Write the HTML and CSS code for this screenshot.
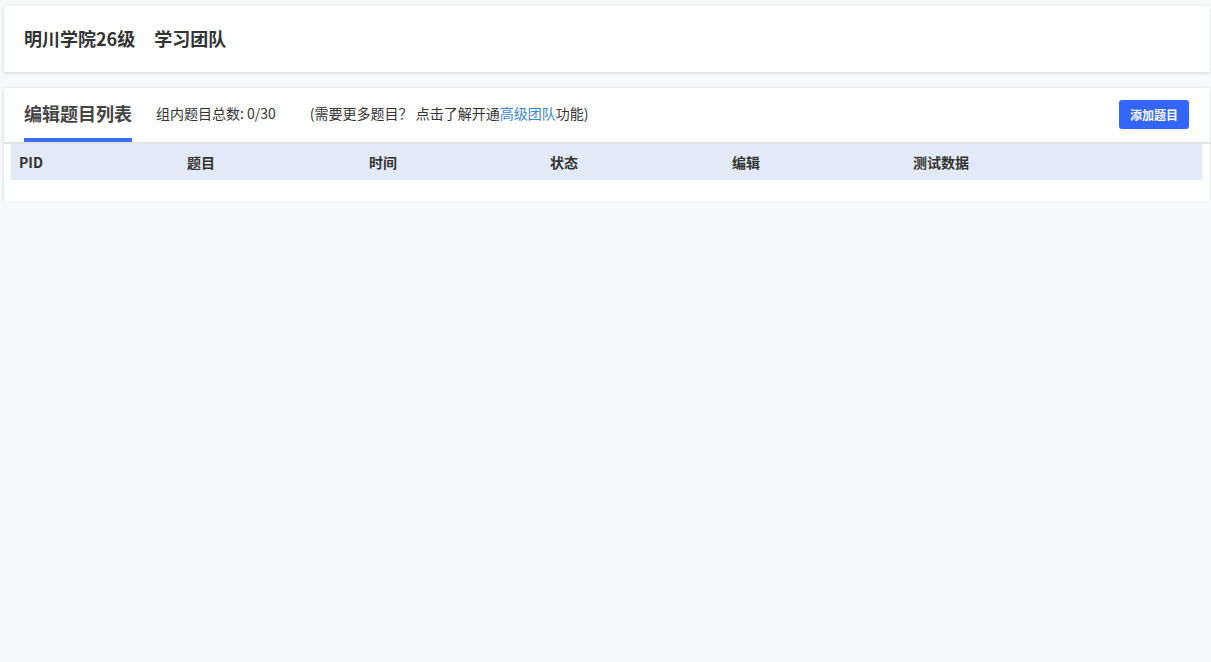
FILE: index.html
```html
<!DOCTYPE html>
<html lang="zh-CN">
<head>
    <meta charset="UTF-8">
    <title>编辑题目列表</title>
    <link rel="stylesheet" href="styles.css">
</head>
<body>

<div class="card team-card">
    <h1 class="team-name">明川学院26级<span class="team-kind">学习团队</span></h1>
</div>

<div class="card list-card">
    <div class="list-head">
        <h2 class="tab active">编辑题目列表</h2>
        <span class="count">组内题目总数: 0/30</span>
        <span class="more">(需要更多题目？ 点击了解开通<a href="#">高级团队</a>功能)</span>
        <button class="btn-add">添加题目</button>
    </div>
    <div class="table">
        <div class="thead">
            <span>PID</span>
            <span>题目</span>
            <span>时间</span>
            <span>状态</span>
            <span>编辑</span>
            <span>测试数据</span>
        </div>
    </div>
</div>

</body>
</html>
```

FILE: styles.css
```css
body { margin: 0; padding: 6px 1px 0 4px; background: #f8f9fb; color: #333; font-family: "Noto Sans CJK SC", "Noto Sans", sans-serif; }
.card { background: #fff; box-shadow: 0 1px 4px rgba(0,0,0,0.16); }
.team-card { height: 66px; display: flex; align-items: center; padding-left: 20px; margin-bottom: 16px; }
.team-name { margin: 0 0 3px; font-size: 18px; font-weight: bold; color: #333; }
.team-kind { margin-left: 19px; }
.list-card { padding-bottom: 21px; }
.list-head { display: flex; align-items: center; height: 54px; padding: 0 21px 0 20px; border-bottom: 2px solid #e2e2e2; }
.tab { margin: 0; height: 54px; line-height: 50px; font-size: 18px; font-weight: bold; color: #444; box-sizing: border-box; }
.tab.active { border-bottom: 4px solid #3b6ef5; }
.count { margin: 0 0 5px 24px; font-size: 14px; color: #333; }
.more { margin: 0 0 5px 34px; font-size: 14px; color: #333; }
.more a { color: #3a86d0; text-decoration: none; }
.btn-add { margin: 0 0 2px auto; background: #3366ff; color: #fff; border: none; border-radius: 3px; height: 29px; width: 70px; font-family: inherit; font-size: 12px; font-weight: bold; padding: 0; }
.table { padding: 0 8px 0 7px; }
.thead { display: grid; grid-template-columns: 168px 182px 181px 182px 181px 1fr; height: 36px; align-items: center; padding-left: 8px; background: #e3eaf7; font-size: 14px; font-weight: bold; color: #333; }
```
